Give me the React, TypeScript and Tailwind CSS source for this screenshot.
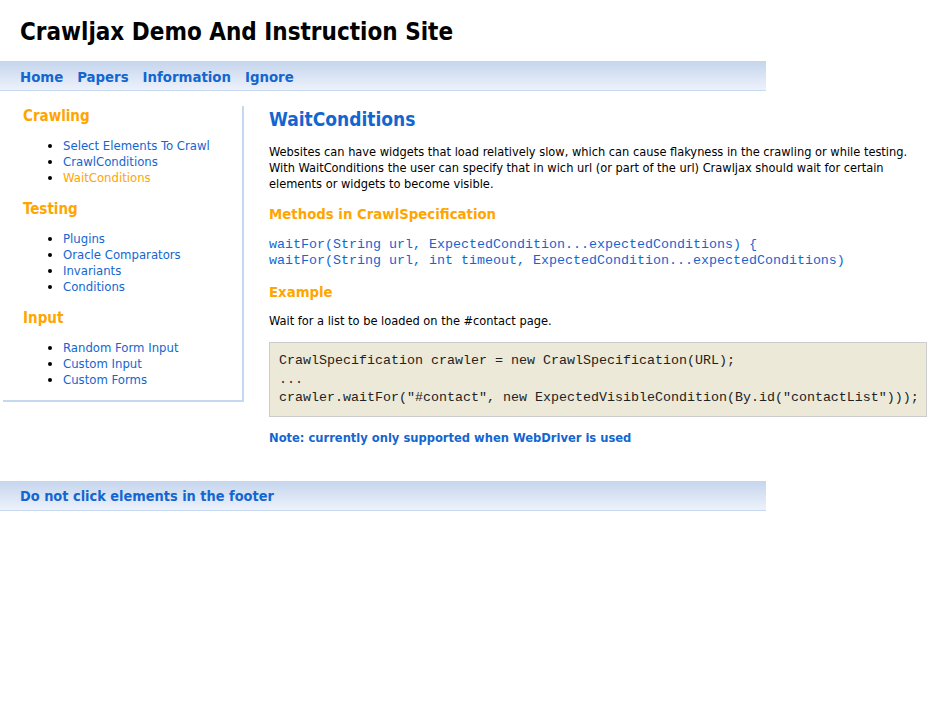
import React from "react";

const font = { fontFamily: '"DejaVu Sans Condensed", "Liberation Sans", sans-serif' };
const mono = { fontFamily: '"Liberation Mono", "Courier New", monospace' };

const sections = [
  { title: "Crawling", items: ["Select Elements To Crawl", "CrawlConditions", "WaitConditions"] },
  { title: "Testing", items: ["Plugins", "Oracle Comparators", "Invariants", "Conditions"] },
  { title: "Input", items: ["Random Form Input", "Custom Input", "Custom Forms"] },
];

function Bar({ children, small }: { children: React.ReactNode; small?: boolean }) {
  return (
    <div
      className={`w-[766px] h-[30px] flex items-center gap-[14px] px-5 pt-[3px] bg-gradient-to-b from-[#c5d5ed] to-[#edf2fb] border-b border-[#c5d8f0] font-bold text-[#1366d0] ${
        small ? "text-[14.4px]" : "text-[14.8px]"
      }`}
    >
      {children}
    </div>
  );
}

export default function App() {
  return (
    <div className="min-h-[720px] bg-white text-black text-[12.7px]" style={font}>
      <div className="h-[61px] px-5 pt-[16px]">
        <h1 className="text-[24px] font-bold leading-[32px]">Crawljax Demo And Instruction Site</h1>
      </div>
      <Bar>
        <a>Home</a>
        <a>Papers</a>
        <a>Information</a>
        <a>Ignore</a>
      </Bar>

      <div className="flex items-start h-[390px]">
        <div className="ml-[3px] mt-[15px] w-[241px] border-r-2 border-b-2 border-[#c6d7f0] pl-5 pt-[1px] pb-[12px]">
          {sections.map((s) => (
            <div key={s.title} className="mb-[14px] last:mb-0">
              <h3 className="text-[15px] font-bold text-[#ffa500] leading-[18px]">{s.title}</h3>
              <ul className="mt-[13px] pl-10 list-disc marker:text-black text-[13px]">
                {s.items.map((it) => (
                  <li key={it} className={`leading-[16px] ${it === "WaitConditions" ? "text-[#ffa500]" : "text-[#1366d0]"}`}>
                    {it}
                  </li>
                ))}
              </ul>
            </div>
          ))}
        </div>

        <div className="ml-[25px] mt-[15px] w-[660px] shrink-0">
          <h2 className="text-[19px] font-bold text-[#1366d0] leading-[26px]">WaitConditions</h2>
          <p className="mt-[12px] leading-[16px] w-[645px]">
            Websites can have widgets that load relatively slow, which can cause flakyness in the crawling or while testing.
            With WaitConditions the user can specify that in wich url (or part of the url) Crawljax should wait for certain
            elements or widgets to become visible.
          </p>
          <h3 className="mt-[13px] text-[14.8px] font-bold text-[#ffa500] leading-[18px]">Methods in CrawlSpecification</h3>
          <pre className="mt-[14px] text-[13.33px] leading-[16px] text-[#1366d0]" style={mono}>
            {"waitFor(String url, ExpectedCondition...expectedConditions) {\nwaitFor(String url, int timeout, ExpectedCondition...expectedConditions)"}
          </pre>
          <h3 className="mt-[14px] text-[14.8px] font-bold text-[#ffa500] leading-[18px]">Example</h3>
          <p className="mt-[12px] leading-[16px]">Wait for a list to be loaded on the #contact page.</p>
          <pre
            className="mt-[13px] w-[658px] bg-[#ece9d8] border border-[#cccccc] px-[9px] pt-[9px] pb-[8px] text-[13.33px] leading-[18.5px] text-[#222]"
            style={mono}
          >
            {'CrawlSpecification crawler = new CrawlSpecification(URL);\n...\ncrawler.waitFor("#contact", new ExpectedVisibleCondition(By.id("contactList")));'}
          </pre>
          <p className="mt-[13px] font-bold text-[12.8px] text-[#1366d0] leading-[16px]">
            Note: currently only supported when WebDriver is used
          </p>
        </div>
      </div>

      <Bar small>
        <span>Do not click elements in the footer</span>
      </Bar>
    </div>
  );
}
